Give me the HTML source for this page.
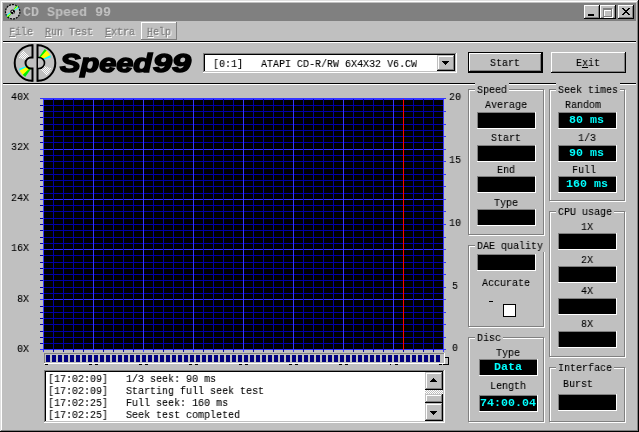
<!DOCTYPE html>
<html><head><meta charset="utf-8"><title>CD Speed 99</title>
<style>
html,body{margin:0;padding:0;background:#c0c0c0;overflow:hidden}
#w{position:relative;width:639px;height:432px;background:#c0c0c0;overflow:hidden}
#w div,#w span,#w svg{position:absolute}
.t,.b,.m,.tt,.lg{will-change:transform}
.t{font:11.5px/12px "Liberation Mono",monospace;transform:scaleX(.8696);transform-origin:0 0;white-space:pre;color:#000;-webkit-text-stroke:.1px #000}
.b{font:bold 11.5px/12px "Liberation Mono",monospace;transform:scaleX(1.0145);transform-origin:0 0;white-space:pre;color:#0ff}
.m{font:11.5px/12px "Liberation Mono",monospace;transform:scaleX(.8696);transform-origin:0 0;white-space:pre;color:#808080;-webkit-text-stroke:.3px #808080;text-shadow:1.2px 1px 0 #fff}
.gw{border:1px solid #fff;box-sizing:content-box}
.gg{border:1px solid #808080;box-sizing:content-box}
</style></head><body><div id="w">

<div style="left:0px;top:0px;width:639px;height:1px;background:#dfdfdf;"></div>
<div style="left:0px;top:0px;width:1px;height:432px;background:#dfdfdf;"></div>
<div style="left:1px;top:1px;width:637px;height:1px;background:#fff;"></div>
<div style="left:1px;top:1px;width:1px;height:430px;background:#fff;"></div>
<div style="left:637px;top:1px;width:1px;height:430px;background:#808080;"></div>
<div style="left:1px;top:430px;width:637px;height:1px;background:#808080;"></div>
<div style="left:638px;top:0px;width:1px;height:432px;background:#000;"></div>
<div style="left:0px;top:431px;width:639px;height:1px;background:#000;"></div>
<div style="left:3px;top:3px;width:633px;height:18px;background:#808080;"></div>
<svg style="left:4px;top:3px" width="17" height="17" viewBox="0 0 17 17">
<circle cx="8.7" cy="8.8" r="7.2" fill="#c0c0c0" stroke="#000" stroke-width="1.2" stroke-dasharray="2 1"/>
<path d="M2.2 12.2 L5.8 9.6 L7.2 11 L3.8 14 Z" fill="#0ff"/>
<path d="M2.8 13 L6.4 10.2 L7.2 11 L3.8 14 Z" fill="#ff0"/>
<path d="M3.5 13.8 L6.9 10.7 L7.2 11 L4.4 14.6 Z" fill="#0c0"/>
<path d="M14.8 4.8 L11.2 7.4 L9.8 6 L13.2 3 Z" fill="#0ff"/>
<path d="M14 3.8 L10.6 6.8 L9.8 6 L13.2 3 Z" fill="#ff0"/>
<path d="M13.2 3 L10.1 6.3 L9.8 6 L12.4 2.4 Z" fill="#0c0"/>
<circle cx="8.7" cy="8.8" r="2.4" fill="#000"/>
<circle cx="8.2" cy="8.3" r=".8" fill="#fff"/>
<circle cx="9.7" cy="9.9" r=".6" fill="#fff"/>
</svg>
<span class="tt" style="left:23px;top:4.7px;font:bold 13.5px/16px 'Liberation Mono',monospace;transform:scaleX(.9877);transform-origin:0 0;white-space:pre;color:#c0c0c0">CD Speed 99</span>
<div style="left:584px;top:5px;width:16px;height:14px;background:#000;"></div>
<div style="left:584px;top:5px;width:15px;height:13px;background:#fff;"></div>
<div style="left:585px;top:6px;width:14px;height:12px;background:#808080;"></div>
<div style="left:585px;top:6px;width:13px;height:11px;background:#c0c0c0;"></div>
<div style="left:588px;top:14px;width:6px;height:2px;background:#000;"></div>
<div style="left:600px;top:5px;width:16px;height:14px;background:#000;"></div>
<div style="left:600px;top:5px;width:15px;height:13px;background:#fff;"></div>
<div style="left:601px;top:6px;width:14px;height:12px;background:#808080;"></div>
<div style="left:601px;top:6px;width:13px;height:11px;background:#c0c0c0;"></div>
<div style="left:604px;top:9px;width:7px;height:6px;border:1px solid #fff;border-top-width:2px"></div>
<div style="left:603px;top:8px;width:7px;height:6px;border:1px solid #808080;border-top-width:2px"></div>
<div style="left:618px;top:5px;width:16px;height:14px;background:#000;"></div>
<div style="left:618px;top:5px;width:15px;height:13px;background:#fff;"></div>
<div style="left:619px;top:6px;width:14px;height:12px;background:#808080;"></div>
<div style="left:619px;top:6px;width:13px;height:11px;background:#c0c0c0;"></div>
<svg style="left:622px;top:8px" width="8" height="7" viewBox="0 0 8 7" shape-rendering="crispEdges"><path d="M0 0h2v1h1v1h2v-1h1v-1h2v1h-1v1h-1v1h-1v1h1v1h1v1h1v1h-2v-1h-1v-1h-2v1h-1v1h-2v-1h1v-1h1v-1h1v-1h-1v-1h-1v-1h-1z" fill="#000"/></svg>
<div style="left:141px;top:22px;width:36px;height:18px;background:#808080;"></div>
<div style="left:141px;top:22px;width:35px;height:17px;background:#fff;"></div>
<div style="left:142px;top:23px;width:34px;height:16px;background:#c0c0c0;"></div>
<div style="left:10px;top:37px;width:6px;height:1px;background:#fff;"></div>
<div style="left:9px;top:36px;width:6px;height:1px;background:#808080;"></div>
<span class="m" style="left:9px;top:25.6px;">File</span>
<div style="left:46px;top:37px;width:6px;height:1px;background:#fff;"></div>
<div style="left:45px;top:36px;width:6px;height:1px;background:#808080;"></div>
<span class="m" style="left:45px;top:25.6px;">Run Test</span>
<div style="left:106px;top:37px;width:6px;height:1px;background:#fff;"></div>
<div style="left:105px;top:36px;width:6px;height:1px;background:#808080;"></div>
<span class="m" style="left:105px;top:25.6px;">Extra</span>
<div style="left:148px;top:37px;width:6px;height:1px;background:#fff;"></div>
<div style="left:147px;top:36px;width:6px;height:1px;background:#808080;"></div>
<span class="m" style="left:147px;top:25.6px;">Help</span>
<div style="left:3px;top:41px;width:633px;height:1px;background:#000;"></div>
<div style="left:3px;top:42px;width:633px;height:1px;background:#fff;"></div>
<div style="left:3px;top:83px;width:633px;height:1px;background:#000;"></div>
<div style="left:3px;top:84px;width:633px;height:1px;background:#fff;"></div>
<svg style="left:0;top:43px" width="70" height="40" viewBox="0 43 70 40"><defs><pattern id="hx" width="2" height="2" patternUnits="userSpaceOnUse"><rect width="2" height="2" fill="#c0c0c0"/><rect width="1" height="1" fill="#fff"/><rect x="1" y="1" width="1" height="1" fill="#fff"/></pattern></defs><path d="M47.2 51.2 L46.8 50.8 L46.4 50.4 L46.0 50.1 L45.6 49.7 L45.2 49.4 L44.8 49.1 L39.0 57.3 L39.2 57.4 L39.4 57.5 L39.5 57.7 L39.7 57.8 L39.9 58.0 L40.0 58.1Z" fill="#0e0"/><path d="M50.3 55.5 L49.8 54.6 L49.3 53.7 L48.7 52.9 L48.0 52.1 L47.3 51.3 L46.6 50.6 L39.8 57.9 L40.1 58.2 L40.4 58.5 L40.6 58.8 L40.9 59.2 L41.1 59.6 L41.3 59.9Z" fill="#ff0"/><path d="M51.0 57.2 L50.9 56.9 L50.7 56.5 L50.6 56.2 L50.4 55.9 L50.3 55.6 L50.1 55.3 L41.2 59.8 L41.3 59.9 L41.4 60.1 L41.4 60.2 L41.5 60.3 L41.5 60.5 L41.6 60.6Z" fill="#0ff"/><path d="M19.0 68.8 L19.1 69.1 L19.3 69.5 L19.4 69.8 L19.6 70.1 L19.7 70.4 L19.9 70.7 L28.8 66.2 L28.7 66.1 L28.6 65.9 L28.6 65.8 L28.5 65.7 L28.5 65.5 L28.4 65.4Z" fill="#0ff"/><path d="M19.7 70.5 L20.2 71.4 L20.7 72.3 L21.3 73.1 L22.0 73.9 L22.7 74.7 L23.4 75.4 L30.2 68.1 L29.9 67.8 L29.6 67.5 L29.4 67.2 L29.1 66.8 L28.9 66.4 L28.7 66.1Z" fill="#ff0"/><path d="M22.8 74.8 L23.2 75.2 L23.6 75.6 L24.0 75.9 L24.4 76.3 L24.8 76.6 L25.2 76.9 L31.0 68.7 L30.8 68.6 L30.6 68.5 L30.5 68.3 L30.3 68.2 L30.1 68.0 L30.0 67.9Z" fill="#0e0"/><path d="M23.6 50.4 L22.6 51.4 L21.6 52.5 L20.7 53.7 L20.0 55.0 L19.4 56.4 L18.8 57.7 L28.3 60.8 L28.6 60.3 L28.8 59.7 L29.1 59.2 L29.5 58.7 L29.9 58.2 L30.3 57.8Z" fill="url(#hx)"/><path d="M46.4 75.6 L47.4 74.6 L48.4 73.5 L49.3 72.3 L50.0 71.0 L50.6 69.6 L51.2 68.3 L41.7 65.2 L41.4 65.7 L41.2 66.3 L40.9 66.8 L40.5 67.3 L40.1 67.8 L39.7 68.2Z" fill="url(#hx)"/><path d="M32.5 45.2 A17.6 17.6 0 0 0 32.5 80.8" fill="none" stroke="#000" stroke-width="2"/><path d="M32.5 44.2 V57.5 H31 A5.5 5.5 0 0 0 31 68.5 H32.5 V81.8" fill="none" stroke="#000" stroke-width="2"/><path d="M37.5 45.2 A17.6 17.6 0 0 1 37.5 80.8" fill="none" stroke="#000" stroke-width="2"/><path d="M37.5 44.2 V81.8" fill="none" stroke="#000" stroke-width="2"/><path d="M38 57.5 H39 A5.5 5.5 0 0 1 39 68.5 H38" fill="#c0c0c0" stroke="#000" stroke-width="1.6"/></svg>
<span class="lg" style="left:60px;top:47px;font:italic bold 25px/32px 'Liberation Sans',sans-serif;transform:scaleX(1.225);transform-origin:0 0;white-space:pre;color:#000;-webkit-text-stroke:1.5px #000">Speed<span style="position:static;display:inline-block;transform:scaleX(1.11);transform-origin:0 0;margin-left:.8px">99</span></span>
<div style="left:203px;top:53px;width:254px;height:20px;background:#fff;"></div>
<div style="left:203px;top:53px;width:253px;height:19px;background:#808080;"></div>
<div style="left:204px;top:54px;width:252px;height:18px;background:#c0c0c0;"></div>
<div style="left:204px;top:54px;width:251px;height:17px;background:#000;"></div>
<div style="left:205px;top:55px;width:250px;height:16px;background:#fff;"></div>
<span class="t" style="left:213px;top:57.6px;">[0:1]   ATAPI CD-R/RW 6X4X32 V6.CW</span>
<div style="left:437px;top:55px;width:18px;height:16px;background:#000;"></div>
<div style="left:437px;top:55px;width:17px;height:15px;background:#c0c0c0;"></div>
<div style="left:438px;top:56px;width:16px;height:14px;background:#808080;"></div>
<div style="left:438px;top:56px;width:15px;height:13px;background:#fff;"></div>
<div style="left:439px;top:57px;width:14px;height:12px;background:#c0c0c0;"></div>
<div style="left:442px;top:61px;width:7px;height:1px;background:#000;"></div>
<div style="left:443px;top:62px;width:5px;height:1px;background:#000;"></div>
<div style="left:444px;top:63px;width:3px;height:1px;background:#000;"></div>
<div style="left:445px;top:64px;width:1px;height:1px;background:#000;"></div>
<div style="left:468px;top:52px;width:75px;height:21px;background:#000;"></div>
<div style="left:469px;top:53px;width:73px;height:19px;background:#000;"></div>
<div style="left:469px;top:53px;width:72px;height:18px;background:#fff;"></div>
<div style="left:470px;top:54px;width:71px;height:17px;background:#808080;"></div>
<div style="left:470px;top:54px;width:70px;height:16px;background:#c0c0c0;"></div>
<span class="t" style="left:490px;top:56.6px;">Start</span>
<div style="left:551px;top:52px;width:75px;height:21px;background:#000;"></div>
<div style="left:551px;top:52px;width:74px;height:20px;background:#fff;"></div>
<div style="left:552px;top:53px;width:73px;height:19px;background:#808080;"></div>
<div style="left:552px;top:53px;width:72px;height:18px;background:#c0c0c0;"></div>
<span class="t" style="left:576px;top:56.6px;">Exit</span>
<div style="left:582px;top:67px;width:6px;height:1px;background:#000;"></div>
<svg style="left:36px;top:94px" width="414" height="262" viewBox="36 94 414 262" shape-rendering="crispEdges"><rect x="44" y="100" width="399" height="249" fill="#000"/><rect x="40" y="105" width="404" height="1" fill="#0000a8"/><rect x="40" y="111" width="404" height="1" fill="#0000a8"/><rect x="40" y="117" width="404" height="1" fill="#0000a8"/><rect x="40" y="124" width="404" height="1" fill="#0000a8"/><rect x="40" y="130" width="404" height="1" fill="#0000a8"/><rect x="40" y="136" width="404" height="1" fill="#0000a8"/><rect x="40" y="142" width="404" height="1" fill="#0000a8"/><rect x="40" y="155" width="404" height="1" fill="#0000a8"/><rect x="40" y="161" width="404" height="1" fill="#0000a8"/><rect x="40" y="168" width="404" height="1" fill="#0000a8"/><rect x="40" y="174" width="404" height="1" fill="#0000a8"/><rect x="40" y="180" width="404" height="1" fill="#0000a8"/><rect x="40" y="186" width="404" height="1" fill="#0000a8"/><rect x="40" y="193" width="404" height="1" fill="#0000a8"/><rect x="40" y="205" width="404" height="1" fill="#0000a8"/><rect x="40" y="211" width="404" height="1" fill="#0000a8"/><rect x="40" y="218" width="404" height="1" fill="#0000a8"/><rect x="40" y="224" width="404" height="1" fill="#0000a8"/><rect x="40" y="230" width="404" height="1" fill="#0000a8"/><rect x="40" y="237" width="404" height="1" fill="#0000a8"/><rect x="40" y="243" width="404" height="1" fill="#0000a8"/><rect x="40" y="255" width="404" height="1" fill="#0000a8"/><rect x="40" y="262" width="404" height="1" fill="#0000a8"/><rect x="40" y="268" width="404" height="1" fill="#0000a8"/><rect x="40" y="274" width="404" height="1" fill="#0000a8"/><rect x="40" y="280" width="404" height="1" fill="#0000a8"/><rect x="40" y="287" width="404" height="1" fill="#0000a8"/><rect x="40" y="293" width="404" height="1" fill="#0000a8"/><rect x="40" y="306" width="404" height="1" fill="#0000a8"/><rect x="40" y="312" width="404" height="1" fill="#0000a8"/><rect x="40" y="318" width="404" height="1" fill="#0000a8"/><rect x="40" y="324" width="404" height="1" fill="#0000a8"/><rect x="40" y="331" width="404" height="1" fill="#0000a8"/><rect x="40" y="337" width="404" height="1" fill="#0000a8"/><rect x="40" y="343" width="404" height="1" fill="#0000a8"/><rect x="43" y="99" width="401" height="1" fill="#3434ff"/><rect x="40" y="149" width="404" height="1" fill="#3434ff"/><rect x="40" y="199" width="404" height="1" fill="#3434ff"/><rect x="40" y="249" width="404" height="1" fill="#3434ff"/><rect x="40" y="299" width="404" height="1" fill="#3434ff"/><rect x="40" y="349" width="404" height="1" fill="#3434ff"/><rect x="40" y="98" width="406" height="1" fill="#3434ff"/><rect x="53" y="99" width="1" height="253" fill="#0000a8"/><rect x="63" y="99" width="1" height="253" fill="#0000a8"/><rect x="73" y="99" width="1" height="253" fill="#0000a8"/><rect x="83" y="99" width="1" height="253" fill="#0000a8"/><rect x="103" y="99" width="1" height="253" fill="#0000a8"/><rect x="113" y="99" width="1" height="253" fill="#0000a8"/><rect x="123" y="99" width="1" height="253" fill="#0000a8"/><rect x="133" y="99" width="1" height="253" fill="#0000a8"/><rect x="153" y="99" width="1" height="253" fill="#0000a8"/><rect x="163" y="99" width="1" height="253" fill="#0000a8"/><rect x="173" y="99" width="1" height="253" fill="#0000a8"/><rect x="183" y="99" width="1" height="253" fill="#0000a8"/><rect x="203" y="99" width="1" height="253" fill="#0000a8"/><rect x="213" y="99" width="1" height="253" fill="#0000a8"/><rect x="223" y="99" width="1" height="253" fill="#0000a8"/><rect x="233" y="99" width="1" height="253" fill="#0000a8"/><rect x="253" y="99" width="1" height="253" fill="#0000a8"/><rect x="263" y="99" width="1" height="253" fill="#0000a8"/><rect x="273" y="99" width="1" height="253" fill="#0000a8"/><rect x="283" y="99" width="1" height="253" fill="#0000a8"/><rect x="303" y="99" width="1" height="253" fill="#0000a8"/><rect x="313" y="99" width="1" height="253" fill="#0000a8"/><rect x="323" y="99" width="1" height="253" fill="#0000a8"/><rect x="333" y="99" width="1" height="253" fill="#0000a8"/><rect x="353" y="99" width="1" height="253" fill="#0000a8"/><rect x="363" y="99" width="1" height="253" fill="#0000a8"/><rect x="373" y="99" width="1" height="253" fill="#0000a8"/><rect x="383" y="99" width="1" height="253" fill="#0000a8"/><rect x="403" y="99" width="1" height="253" fill="#0000a8"/><rect x="413" y="99" width="1" height="253" fill="#0000a8"/><rect x="423" y="99" width="1" height="253" fill="#0000a8"/><rect x="433" y="99" width="1" height="253" fill="#0000a8"/><rect x="43" y="98" width="1" height="254" fill="#3434ff"/><rect x="93" y="98" width="1" height="254" fill="#3434ff"/><rect x="143" y="98" width="1" height="254" fill="#3434ff"/><rect x="193" y="98" width="1" height="254" fill="#3434ff"/><rect x="243" y="98" width="1" height="254" fill="#3434ff"/><rect x="293" y="98" width="1" height="254" fill="#3434ff"/><rect x="343" y="98" width="1" height="254" fill="#3434ff"/><rect x="393" y="98" width="1" height="254" fill="#3434ff"/><rect x="443" y="98" width="1" height="254" fill="#3434ff"/><rect x="443" y="111" width="3" height="1" fill="#3434ff"/><rect x="443" y="124" width="3" height="1" fill="#3434ff"/><rect x="443" y="136" width="3" height="1" fill="#3434ff"/><rect x="443" y="149" width="3" height="1" fill="#3434ff"/><rect x="443" y="161" width="3" height="1" fill="#3434ff"/><rect x="443" y="174" width="3" height="1" fill="#3434ff"/><rect x="443" y="186" width="3" height="1" fill="#3434ff"/><rect x="443" y="199" width="3" height="1" fill="#3434ff"/><rect x="443" y="211" width="3" height="1" fill="#3434ff"/><rect x="443" y="224" width="3" height="1" fill="#3434ff"/><rect x="443" y="237" width="3" height="1" fill="#3434ff"/><rect x="443" y="249" width="3" height="1" fill="#3434ff"/><rect x="443" y="262" width="3" height="1" fill="#3434ff"/><rect x="443" y="274" width="3" height="1" fill="#3434ff"/><rect x="443" y="287" width="3" height="1" fill="#3434ff"/><rect x="443" y="299" width="3" height="1" fill="#3434ff"/><rect x="443" y="312" width="3" height="1" fill="#3434ff"/><rect x="443" y="324" width="3" height="1" fill="#3434ff"/><rect x="443" y="337" width="3" height="1" fill="#3434ff"/><rect x="443" y="349" width="3" height="1" fill="#3434ff"/><rect x="403" y="99" width="1" height="251" fill="#f00"/></svg>
<span class="t" style="left:11px;top:90.6px;">40X</span>
<span class="t" style="left:11px;top:140.6px;">32X</span>
<span class="t" style="left:11px;top:191.6px;">24X</span>
<span class="t" style="left:11px;top:241.6px;">16X</span>
<span class="t" style="left:11px;top:292.6px;"> 8X</span>
<span class="t" style="left:11px;top:342.6px;"> 0X</span>
<span class="t" style="left:449px;top:90.6px;">20</span>
<span class="t" style="left:449px;top:153.6px;">15</span>
<span class="t" style="left:449px;top:216.6px;">10</span>
<span class="t" style="left:452px;top:279.6px;">5</span>
<span class="t" style="left:452px;top:341.6px;">0</span>
<div style="left:44px;top:353px;width:401px;height:11px;background:#fff;"></div>
<div style="left:44px;top:353px;width:400px;height:10px;background:#808080;"></div>
<div style="left:45px;top:354px;width:399px;height:9px;background:#c0c0c0;"></div>
<div style="left:46px;top:355px;width:394px;height:7px;background:repeating-linear-gradient(90deg,#000080 0,#000080 4px,#c0c0c0 4px,#c0c0c0 6px)"></div>
<div style="left:45px;top:364px;width:3px;height:1px;background:#000;"></div>
<div style="left:89px;top:364px;width:3px;height:1px;background:#000;"></div>
<div style="left:95px;top:364px;width:3px;height:1px;background:#000;"></div>
<div style="left:139px;top:364px;width:3px;height:1px;background:#000;"></div>
<div style="left:145px;top:364px;width:3px;height:1px;background:#000;"></div>
<div style="left:189px;top:364px;width:3px;height:1px;background:#000;"></div>
<div style="left:195px;top:364px;width:3px;height:1px;background:#000;"></div>
<div style="left:239px;top:364px;width:3px;height:1px;background:#000;"></div>
<div style="left:245px;top:364px;width:3px;height:1px;background:#000;"></div>
<div style="left:289px;top:364px;width:3px;height:1px;background:#000;"></div>
<div style="left:295px;top:364px;width:3px;height:1px;background:#000;"></div>
<div style="left:339px;top:364px;width:3px;height:1px;background:#000;"></div>
<div style="left:345px;top:364px;width:3px;height:1px;background:#000;"></div>
<div style="left:390px;top:364px;width:1px;height:1px;background:#000;"></div>
<div style="left:395px;top:364px;width:3px;height:1px;background:#000;"></div>
<div style="left:439px;top:364px;width:3px;height:1px;background:#000;"></div>
<div style="left:443px;top:364px;width:6px;height:1px;background:#000;"></div>
<div style="left:445px;top:357px;width:4px;height:1px;background:#000;"></div>
<div style="left:448px;top:357px;width:1px;height:8px;background:#000;"></div>
<div style="left:44px;top:370px;width:401px;height:53px;background:#fff;"></div>
<div style="left:44px;top:370px;width:400px;height:52px;background:#808080;"></div>
<div style="left:45px;top:371px;width:399px;height:51px;background:#c0c0c0;"></div>
<div style="left:45px;top:371px;width:398px;height:50px;background:#000;"></div>
<div style="left:46px;top:372px;width:397px;height:49px;background:#fff;"></div>
<span class="t" style="left:48px;top:372.6px;">[17:02:09]   1/3 seek: 90 ms</span>
<span class="t" style="left:48px;top:384.6px;">[17:02:09]   Starting full seek test</span>
<span class="t" style="left:48px;top:396.6px;">[17:02:25]   Full seek: 160 ms</span>
<span class="t" style="left:48px;top:408.6px;">[17:02:25]   Seek test completed</span>
<div style="left:425px;top:372px;width:18px;height:49px;background:#fff;background-image:conic-gradient(#c0c0c0 25%,#fff 0 50%,#c0c0c0 0 75%,#fff 0);background-size:2px 2px"></div>
<div style="left:425px;top:372px;width:18px;height:18px;background:#000;"></div>
<div style="left:425px;top:372px;width:17px;height:17px;background:#c0c0c0;"></div>
<div style="left:426px;top:373px;width:16px;height:16px;background:#808080;"></div>
<div style="left:426px;top:373px;width:15px;height:15px;background:#fff;"></div>
<div style="left:427px;top:374px;width:14px;height:14px;background:#c0c0c0;"></div>
<div style="left:433px;top:378px;width:1px;height:1px;background:#000;"></div>
<div style="left:432px;top:379px;width:3px;height:1px;background:#000;"></div>
<div style="left:431px;top:380px;width:5px;height:1px;background:#000;"></div>
<div style="left:430px;top:381px;width:7px;height:1px;background:#000;"></div>
<div style="left:425px;top:394px;width:18px;height:9px;background:#000;"></div>
<div style="left:425px;top:394px;width:17px;height:8px;background:#c0c0c0;"></div>
<div style="left:426px;top:395px;width:16px;height:7px;background:#808080;"></div>
<div style="left:426px;top:395px;width:15px;height:6px;background:#fff;"></div>
<div style="left:427px;top:396px;width:14px;height:5px;background:#c0c0c0;"></div>
<div style="left:425px;top:403px;width:18px;height:18px;background:#000;"></div>
<div style="left:425px;top:403px;width:17px;height:17px;background:#c0c0c0;"></div>
<div style="left:426px;top:404px;width:16px;height:16px;background:#808080;"></div>
<div style="left:426px;top:404px;width:15px;height:15px;background:#fff;"></div>
<div style="left:427px;top:405px;width:14px;height:14px;background:#c0c0c0;"></div>
<div style="left:430px;top:411px;width:7px;height:1px;background:#000;"></div>
<div style="left:431px;top:412px;width:5px;height:1px;background:#000;"></div>
<div style="left:432px;top:413px;width:3px;height:1px;background:#000;"></div>
<div style="left:433px;top:414px;width:1px;height:1px;background:#000;"></div>
<div class="gw" style="left:469px;top:90px;width:74px;height:144px"></div>
<div class="gg" style="left:468px;top:89px;width:74px;height:144px"></div>
<div style="left:475px;top:83px;width:34px;height:13px;background:#c0c0c0;"></div>
<span class="t" style="left:477px;top:83.6px;">Speed</span>
<span class="t" style="left:485px;top:98.6px;">Average</span>
<div style="left:477px;top:112px;width:59px;height:17px;background:#fff;"></div>
<div style="left:477px;top:112px;width:58px;height:16px;background:#808080;"></div>
<div style="left:478px;top:113px;width:57px;height:15px;background:#000;"></div>
<span class="t" style="left:491px;top:131.6px;">Start</span>
<div style="left:477px;top:145px;width:59px;height:17px;background:#fff;"></div>
<div style="left:477px;top:145px;width:58px;height:16px;background:#808080;"></div>
<div style="left:478px;top:146px;width:57px;height:15px;background:#000;"></div>
<span class="t" style="left:497px;top:163.6px;">End</span>
<div style="left:477px;top:176px;width:59px;height:17px;background:#fff;"></div>
<div style="left:477px;top:176px;width:58px;height:16px;background:#808080;"></div>
<div style="left:478px;top:177px;width:57px;height:15px;background:#000;"></div>
<span class="t" style="left:494px;top:196.6px;">Type</span>
<div style="left:477px;top:209px;width:59px;height:17px;background:#fff;"></div>
<div style="left:477px;top:209px;width:58px;height:16px;background:#808080;"></div>
<div style="left:478px;top:210px;width:57px;height:15px;background:#000;"></div>
<div class="gw" style="left:469px;top:246px;width:74px;height:80px"></div>
<div class="gg" style="left:468px;top:245px;width:74px;height:80px"></div>
<div style="left:475px;top:239px;width:72px;height:13px;background:#c0c0c0;"></div>
<span class="t" style="left:477px;top:239.6px;">DAE quality</span>
<div style="left:477px;top:254px;width:59px;height:17px;background:#fff;"></div>
<div style="left:477px;top:254px;width:58px;height:16px;background:#808080;"></div>
<div style="left:478px;top:255px;width:57px;height:15px;background:#000;"></div>
<span class="t" style="left:482px;top:276.6px;">Accurate</span>
<div style="left:489px;top:301px;width:4px;height:1px;background:#000;"></div>
<div style="left:503px;top:304px;width:13px;height:13px;background:#000;"></div>
<div style="left:504px;top:305px;width:11px;height:11px;background:#fff;"></div>
<div class="gw" style="left:469px;top:338px;width:74px;height:83px"></div>
<div class="gg" style="left:468px;top:337px;width:74px;height:83px"></div>
<div style="left:475px;top:331px;width:28px;height:13px;background:#c0c0c0;"></div>
<span class="t" style="left:477px;top:331.6px;">Disc</span>
<span class="t" style="left:496px;top:346.6px;">Type</span>
<div style="left:479px;top:359px;width:59px;height:17px;background:#fff;"></div>
<div style="left:479px;top:359px;width:58px;height:16px;background:#808080;"></div>
<div style="left:480px;top:360px;width:57px;height:15px;background:#000;"></div>
<span class="b" style="left:494px;top:360.6px;">Data</span>
<span class="t" style="left:490px;top:379.6px;">Length</span>
<div style="left:479px;top:395px;width:59px;height:17px;background:#fff;"></div>
<div style="left:479px;top:395px;width:58px;height:16px;background:#808080;"></div>
<div style="left:480px;top:396px;width:57px;height:15px;background:#000;"></div>
<span class="b" style="left:480px;top:396.6px;">74:00.04</span>
<div class="gw" style="left:550px;top:90px;width:74px;height:110px"></div>
<div class="gg" style="left:549px;top:89px;width:74px;height:110px"></div>
<div style="left:556px;top:83px;width:64px;height:13px;background:#c0c0c0;"></div>
<span class="t" style="left:558px;top:83.6px;">Seek times</span>
<span class="t" style="left:565px;top:98.6px;">Random</span>
<div style="left:558px;top:112px;width:59px;height:17px;background:#fff;"></div>
<div style="left:558px;top:112px;width:58px;height:16px;background:#808080;"></div>
<div style="left:559px;top:113px;width:57px;height:15px;background:#000;"></div>
<span class="b" style="left:569px;top:113.6px;">80 ms</span>
<span class="t" style="left:578px;top:131.6px;">1/3</span>
<div style="left:558px;top:145px;width:59px;height:17px;background:#fff;"></div>
<div style="left:558px;top:145px;width:58px;height:16px;background:#808080;"></div>
<div style="left:559px;top:146px;width:57px;height:15px;background:#000;"></div>
<span class="b" style="left:569px;top:146.6px;">90 ms</span>
<span class="t" style="left:572px;top:163.6px;">Full</span>
<div style="left:558px;top:176px;width:59px;height:17px;background:#fff;"></div>
<div style="left:558px;top:176px;width:58px;height:16px;background:#808080;"></div>
<div style="left:559px;top:177px;width:57px;height:15px;background:#000;"></div>
<span class="b" style="left:566px;top:177.6px;">160 ms</span>
<div class="gw" style="left:550px;top:212px;width:74px;height:144px"></div>
<div class="gg" style="left:549px;top:211px;width:74px;height:144px"></div>
<div style="left:556px;top:205px;width:58px;height:13px;background:#c0c0c0;"></div>
<span class="t" style="left:558px;top:205.6px;">CPU usage</span>
<span class="t" style="left:581px;top:220.6px;">1X</span>
<div style="left:558px;top:233px;width:59px;height:17px;background:#fff;"></div>
<div style="left:558px;top:233px;width:58px;height:16px;background:#808080;"></div>
<div style="left:559px;top:234px;width:57px;height:15px;background:#000;"></div>
<span class="t" style="left:581px;top:253.6px;">2X</span>
<div style="left:558px;top:266px;width:59px;height:17px;background:#fff;"></div>
<div style="left:558px;top:266px;width:58px;height:16px;background:#808080;"></div>
<div style="left:559px;top:267px;width:57px;height:15px;background:#000;"></div>
<span class="t" style="left:581px;top:284.6px;">4X</span>
<div style="left:558px;top:298px;width:59px;height:17px;background:#fff;"></div>
<div style="left:558px;top:298px;width:58px;height:16px;background:#808080;"></div>
<div style="left:559px;top:299px;width:57px;height:15px;background:#000;"></div>
<span class="t" style="left:581px;top:317.6px;">8X</span>
<div style="left:558px;top:331px;width:59px;height:17px;background:#fff;"></div>
<div style="left:558px;top:331px;width:58px;height:16px;background:#808080;"></div>
<div style="left:559px;top:332px;width:57px;height:15px;background:#000;"></div>
<div class="gw" style="left:550px;top:368px;width:74px;height:53px"></div>
<div class="gg" style="left:549px;top:367px;width:74px;height:53px"></div>
<div style="left:556px;top:361px;width:58px;height:13px;background:#c0c0c0;"></div>
<span class="t" style="left:558px;top:361.6px;">Interface</span>
<span class="t" style="left:563px;top:377.6px;">Burst</span>
<div style="left:558px;top:394px;width:59px;height:17px;background:#fff;"></div>
<div style="left:558px;top:394px;width:58px;height:16px;background:#808080;"></div>
<div style="left:559px;top:395px;width:57px;height:15px;background:#000;"></div>
</div></body></html>
